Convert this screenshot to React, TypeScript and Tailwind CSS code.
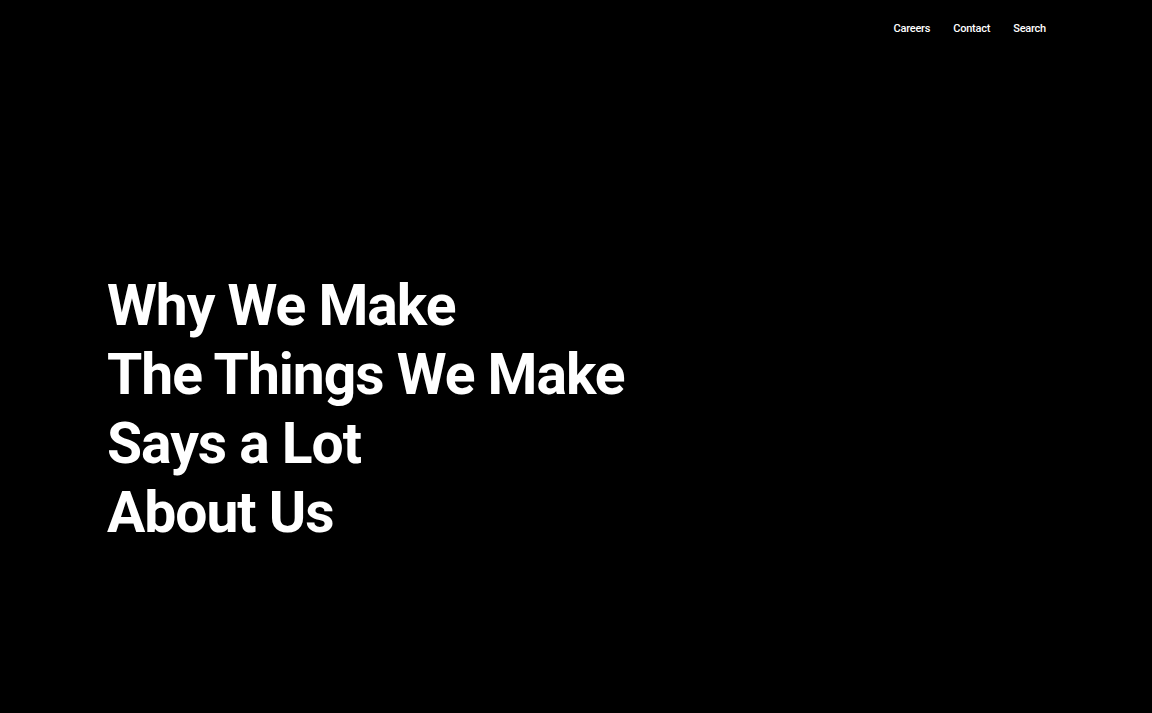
export default function App() {
  const lines = ["Why We Make", "The Things We Make", "Says a Lot", "About Us"];

  return (
    <div className="flex h-[713px] w-full flex-col bg-black font-['Roboto',sans-serif] text-white">
      <header className="flex justify-end px-[106px] pt-[22px]">
        <nav className="flex gap-[23px] text-[11px] font-medium leading-[14px] tracking-[-0.02em]">
          <a href="#">Careers</a>
          <a href="#">Contact</a>
          <a href="#">Search</a>
        </nav>
      </header>

      <main className="pl-[107px] pr-[106px] pt-[235px]">
        <h1 className="text-[57px] font-bold leading-[69px] tracking-[-0.018em]">
          {lines.map((line) => (
            <span key={line} className="block">
              {line}
            </span>
          ))}
        </h1>
      </main>
    </div>
  );
}
